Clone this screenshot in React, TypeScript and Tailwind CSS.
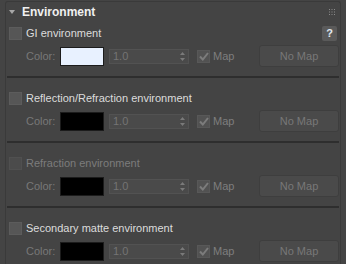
const sections = [
  { label: 'GI environment', color: 'bg-[#e8f1ff]', help: true, disabled: false },
  { label: 'Reflection/Refraction environment', color: 'bg-black', help: false, disabled: false },
  { label: 'Refraction environment', color: 'bg-black', help: false, disabled: true },
  { label: 'Secondary matte environment', color: 'bg-black', help: false, disabled: false },
];

function Section({ label, color, help, disabled }: { label: string; color: string; help: boolean; disabled: boolean }) {
  return (
    <div className="flex flex-col">
      <div className="flex h-[17px] items-center">
        <div className={`ml-[2px] h-[13px] w-[13px] border ${disabled ? 'border-[#505050] bg-[#4b4b4b]' : 'border-[#5c5c5c] bg-[#565656]'}`} />
        <span className={`ml-[4px] text-[11px] ${disabled ? 'text-[#7c7c7c]' : 'text-[#dcdcdc]'}`}>{label}</span>
        {help && (
          <div className="ml-auto mr-[2px] flex h-[15px] w-[15px] items-center justify-center rounded-[2px] bg-[#5a5a5a] text-[11px] font-bold text-[#e0e8f0]">
            ?
          </div>
        )}
      </div>
      <div className="mt-[3px] flex h-[22px] items-center">
        <span className="ml-[19px] w-[34px] text-[11px] text-[#787878]">Color:</span>
        <div className={`h-[19px] w-[44px] border border-[#1c1c1c] ${color}`} />
        <div className="ml-[5px] flex h-[15px] w-[80px] items-center justify-between border border-[#525252] bg-[#4a4a4a] pl-[3px] pr-[3px]">
          <span className="text-[11px] text-[#747474]">1.0</span>
          <svg width="5" height="9" viewBox="0 0 5 9" className="fill-[#7a7a7a]">
            <path d="M2.5 0 L5 3 L0 3 Z" />
            <path d="M0 6 L5 6 L2.5 9 Z" />
          </svg>
        </div>
        <div className="ml-[8px] flex h-[13px] w-[13px] items-center justify-center border border-[#585858] bg-[#525252]">
          <svg width="10" height="9" viewBox="0 0 10 9">
            <path d="M1 4.5 L3.8 7.5 L9 1" stroke="#7c7c7c" strokeWidth="2" fill="none" />
          </svg>
        </div>
        <span className="ml-[3px] text-[11px] text-[#7e7e7e]">Map</span>
        <div className="ml-auto flex h-[22px] w-[80px] items-center justify-center rounded-[3px] border border-[#3e3e3e] bg-[#4a4a4a] text-[11px] text-[#787878]">
          No Map
        </div>
      </div>
      <div className="mt-[9px] h-[2px] bg-[#2e2e2e]" />
      <div className="h-[12px]" />
    </div>
  );
}

export default function App() {
  return (
    <div className="h-[264px] w-[346px] overflow-hidden bg-[#444444] font-['Liberation_Sans',Arial,sans-serif]">
      <div className="mx-[5px] mt-[1px] h-[300px] rounded-t-[3px] border-x border-t border-[#3a3a3a] pl-[1px] pr-[1px]">
        <div className="relative mb-[3px] flex h-[20px] items-center">
          <svg width="6" height="4" viewBox="0 0 6 4" className="ml-[2px] fill-[#a8a8a8]">
            <path d="M0 0 L6 0 L3 4 Z" />
          </svg>
          <span className="ml-[7px] text-[12px] font-bold text-[#f0f0f0]">Environment</span>
          <svg width="6" height="6" viewBox="0 0 6 6" className="absolute right-[4px] top-[7px] fill-[#8a8a8a]">
            <rect x="0" y="0" width="1" height="1" />
            <rect x="2.5" y="0" width="1" height="1" />
            <rect x="5" y="0" width="1" height="1" />
            <rect x="0" y="2.5" width="1" height="1" />
            <rect x="2.5" y="2.5" width="1" height="1" />
            <rect x="5" y="2.5" width="1" height="1" />
            <rect x="0" y="5" width="1" height="1" />
            <rect x="2.5" y="5" width="1" height="1" />
            <rect x="5" y="5" width="1" height="1" />
          </svg>
        </div>
        {sections.map((s) => (
          <Section key={s.label} {...s} />
        ))}
      </div>
    </div>
  );
}
